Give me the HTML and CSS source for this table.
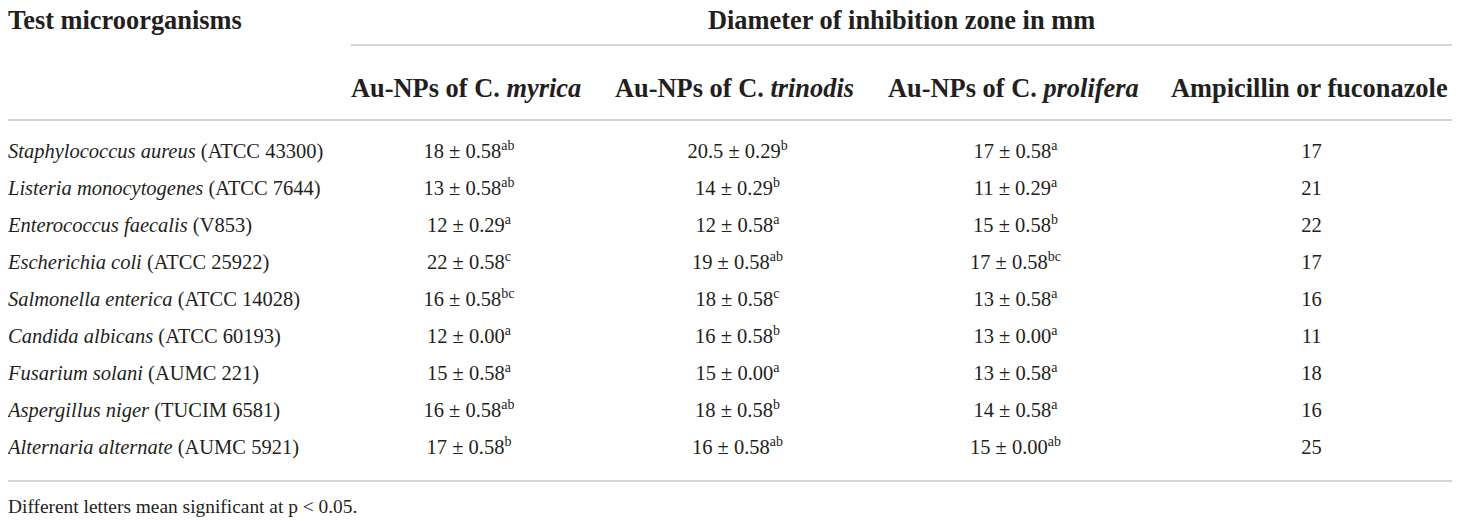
FILE: index.html
```html
<!DOCTYPE html>
<html lang="en">
<head>
    <meta charset="UTF-8">
    <title>Antimicrobial activity of Au-NPs</title>
    <link rel="stylesheet" href="styles.css">
</head>
<body>

    <table class="results">
        <colgroup>
            <col class="c-name">
            <col class="c-1">
            <col class="c-2">
            <col class="c-3">
            <col class="c-4">
        </colgroup>
        <thead>
            <tr class="head-top">
                <th rowspan="2" class="org-head">Test microorganisms</th>
                <th colspan="4" class="group-head">Diameter of inhibition zone in mm</th>
            </tr>
            <tr class="head-cols">
                <th>Au-NPs of C. <i>myrica</i></th>
                <th>Au-NPs of C. <i>trinodis</i></th>
                <th>Au-NPs of C. <i>prolifera</i></th>
                <th class="last">Ampicillin or fuconazole</th>
            </tr>
        </thead>
        <tbody>
            <tr class="first">
                <td><i>Staphylococcus aureus</i> (ATCC 43300)</td>
                <td>18 ± 0.58<sup>ab</sup></td>
                <td>20.5 ± 0.29<sup>b</sup></td>
                <td>17 ± 0.58<sup>a</sup></td>
                <td class="last">17</td>
            </tr>
            <tr>
                <td><i>Listeria monocytogenes</i> (ATCC 7644)</td>
                <td>13 ± 0.58<sup>ab</sup></td>
                <td>14 ± 0.29<sup>b</sup></td>
                <td>11 ± 0.29<sup>a</sup></td>
                <td class="last">21</td>
            </tr>
            <tr>
                <td><i>Enterococcus faecalis</i> (V853)</td>
                <td>12 ± 0.29<sup>a</sup></td>
                <td>12 ± 0.58<sup>a</sup></td>
                <td>15 ± 0.58<sup>b</sup></td>
                <td class="last">22</td>
            </tr>
            <tr>
                <td><i>Escherichia coli</i> (ATCC 25922)</td>
                <td>22 ± 0.58<sup>c</sup></td>
                <td>19 ± 0.58<sup>ab</sup></td>
                <td>17 ± 0.58<sup>bc</sup></td>
                <td class="last">17</td>
            </tr>
            <tr>
                <td><i>Salmonella enterica</i> (ATCC 14028)</td>
                <td>16 ± 0.58<sup>bc</sup></td>
                <td>18 ± 0.58<sup>c</sup></td>
                <td>13 ± 0.58<sup>a</sup></td>
                <td class="last">16</td>
            </tr>
            <tr>
                <td><i>Candida albicans</i> (ATCC 60193)</td>
                <td>12 ± 0.00<sup>a</sup></td>
                <td>16 ± 0.58<sup>b</sup></td>
                <td>13 ± 0.00<sup>a</sup></td>
                <td class="last">11</td>
            </tr>
            <tr>
                <td><i>Fusarium solani</i> (AUMC 221)</td>
                <td>15 ± 0.58<sup>a</sup></td>
                <td>15 ± 0.00<sup>a</sup></td>
                <td>13 ± 0.58<sup>a</sup></td>
                <td class="last">18</td>
            </tr>
            <tr>
                <td><i>Aspergillus niger</i> (TUCIM 6581)</td>
                <td>16 ± 0.58<sup>ab</sup></td>
                <td>18 ± 0.58<sup>b</sup></td>
                <td>14 ± 0.58<sup>a</sup></td>
                <td class="last">16</td>
            </tr>
            <tr class="final">
                <td><i>Alternaria alternate</i> (AUMC 5921)</td>
                <td>17 ± 0.58<sup>b</sup></td>
                <td>16 ± 0.58<sup>ab</sup></td>
                <td>15 ± 0.00<sup>ab</sup></td>
                <td class="last">25</td>
            </tr>
        </tbody>
    </table>

    <p class="note">Different letters mean significant at p &lt; 0.05.</p>

</body>
</html>
```

FILE: styles.css
```css
body {
    margin: 0 8px;
    background: #fff;
    color: #231f20;
    font-family: "Liberation Serif", "Times New Roman", serif;
}
.results {
    width: 1444px;
    border-collapse: collapse;
    table-layout: fixed;
}
.c-name { width: 343px; }
.c-1 { width: 264px; }
.c-2 { width: 273px; }
.c-3 { width: 283px; }
.c-4 { width: 281px; }

th {
    font-size: 26.4px;
    font-weight: bold;
    line-height: 32px;
    white-space: nowrap;
    padding: 0 28px 0 0;
}
th i {
    font-weight: bold;
}
.head-top th {
    padding-top: 4px;
    padding-bottom: 8px;
}
.org-head {
    text-align: left;
    vertical-align: top;
    border-bottom: 2px solid #d4d4d4;
}
.group-head {
    text-align: center;
    padding-right: 0;
    border-bottom: 2px solid #d4d4d4;
}
.head-cols th {
    text-align: left;
    padding-top: 26px;
    padding-bottom: 15px;
    border-bottom: 2px solid #d4d4d4;
}
th.last, td.last {
    padding-right: 0;
}

td {
    font-size: 20.5px;
    line-height: 27px;
    padding: 5px 28px 5px 0;
    text-align: center;
    white-space: nowrap;
}
td:first-child {
    text-align: left;
}
tr.first td {
    padding-top: 17px;
}
tr.final td {
    padding-bottom: 19px;
    border-bottom: 2px solid #d4d4d4;
}
sup {
    font-size: 0.68em;
    line-height: 0;
    vertical-align: 0.6em;
}

.note {
    margin: 13px 0 0;
    font-size: 19.4px;
    line-height: 24px;
}
```
